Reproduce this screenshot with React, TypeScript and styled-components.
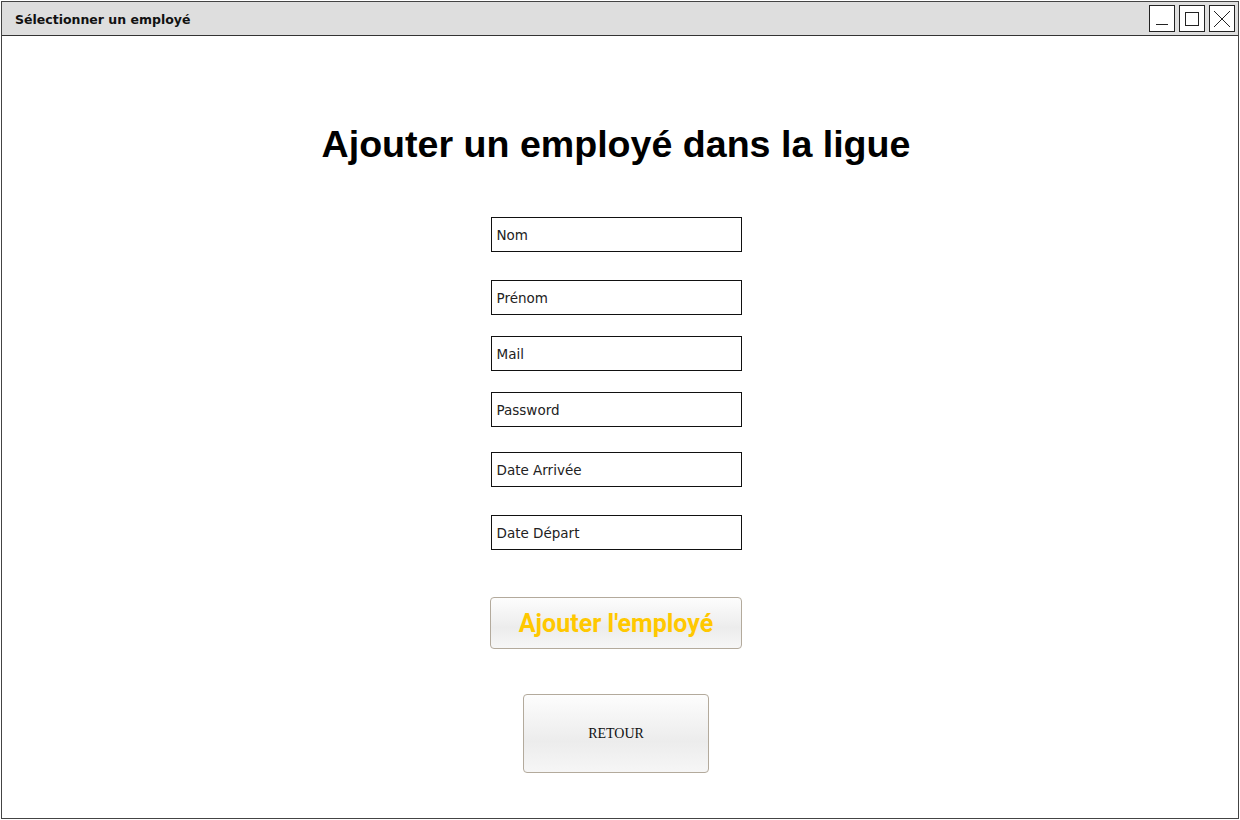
import { createGlobalStyle } from "styled-components";
import styled from "styled-components";

const GlobalStyle = createGlobalStyle`
    html, body {
        margin: 0;
        padding: 0;
        background: #ffffff;
    }
    body {
        padding: 1px 0 0 1px;
        font-family: "Liberation Sans", Arial, sans-serif;
    }
`;

const Window = styled.div`
    width: 1236px;
    height: 816px;
    border: 1px solid #444444;
    display: flex;
    flex-direction: column;
    background: #ffffff;
`;

const TitleBar = styled.div`
    height: 33px;
    flex-shrink: 0;
    display: flex;
    align-items: center;
    justify-content: space-between;
    padding: 0 3px 0 13px;
    background-color: #dedede;
    border-bottom: 1px solid #333333;
`;

const TitleText = styled.span`
    font-family: "Comic Sans MS", "DejaVu Sans", sans-serif;
    font-size: 12.5px;
    font-weight: bold;
    color: #111111;
    padding-top: 2px;
`;

const WinButtons = styled.div`
    display: flex;
    gap: 4px;
`;

const WinButton = styled.div`
    width: 24px;
    height: 25px;
    border: 1px solid #222222;
    background: #ffffff;
    display: flex;
    align-items: center;
    justify-content: center;
    > svg {
        display: block;
    }
`;

const Content = styled.div`
    flex: 1;
    display: flex;
    flex-direction: column;
    align-items: center;
    padding-top: 86px;
    padding-right: 8px;
`;

const Heading = styled.h1`
    margin: 0;
    font-family: "Liberation Sans", Arial, sans-serif;
    font-size: 37.6px;
    font-weight: bold;
    line-height: 44px;
    color: #000000;
`;

const Form = styled.div`
    margin-top: 51px;
    display: flex;
    flex-direction: column;
    align-items: center;
`;

const Field = styled.div<{ $gap: number }>`
    width: 244px;
    height: 33px;
    margin-top: ${p => p.$gap}px;
    border: 1px solid #111111;
    display: flex;
    align-items: center;
    padding-left: 5px;
    box-sizing: content-box;
    font-family: "Comic Sans MS", "DejaVu Sans", sans-serif;
    font-size: 13.5px;
    color: #222222;
    &:first-child {
        margin-top: 0;
    }
`;

const MainButton = styled.button`
    margin-top: 47px;
    width: 252px;
    height: 52px;
    border: 1px solid #b3aa9c;
    border-radius: 4px;
    background: linear-gradient(#fdfdfd, #ececec 60%, #f6f6f6);
    font-family: Roboto, "Liberation Sans", sans-serif;
    font-weight: bold;
    font-size: 25px;
    color: #ffc800;
    cursor: pointer;
`;

const BackButton = styled.button`
    margin-top: 45px;
    width: 186px;
    height: 79px;
    border: 1px solid #b3aa9c;
    border-radius: 4px;
    background: linear-gradient(#fdfdfd, #ececec 60%, #f6f6f6);
    font-family: "Liberation Serif", "Times New Roman", serif;
    font-size: 14px;
    color: #111111;
    cursor: pointer;
`;

const fields: { label: string; gap: number }[] = [
    { label: "Nom", gap: 0 },
    { label: "Prénom", gap: 28 },
    { label: "Mail", gap: 21 },
    { label: "Password", gap: 21 },
    { label: "Date Arrivée", gap: 25 },
    { label: "Date Départ", gap: 28 },
];

const App = () => {
    return (
        <>
            <GlobalStyle />
            <Window>
                <TitleBar>
                    <TitleText>Sélectionner un employé</TitleText>
                    <WinButtons>
                        <WinButton>
                            <svg width="14" height="14" viewBox="0 0 14 14">
                                <line x1="1" y1="12.5" x2="13" y2="12.5" stroke="#222" strokeWidth="1" />
                            </svg>
                        </WinButton>
                        <WinButton>
                            <svg width="14" height="14" viewBox="0 0 14 14">
                                <rect x="0.5" y="0.5" width="13" height="13" fill="none" stroke="#222" strokeWidth="1" />
                            </svg>
                        </WinButton>
                        <WinButton>
                            <svg width="18" height="18" viewBox="0 0 18 18">
                                <line x1="1" y1="1" x2="17" y2="17" stroke="#222" strokeWidth="1" />
                                <line x1="17" y1="1" x2="1" y2="17" stroke="#222" strokeWidth="1" />
                            </svg>
                        </WinButton>
                    </WinButtons>
                </TitleBar>
                <Content>
                    <Heading>Ajouter un employé dans la ligue</Heading>
                    <Form>
                        {fields.map(f => (
                            <Field key={f.label} $gap={f.gap}>{f.label}</Field>
                        ))}
                    </Form>
                    <MainButton>Ajouter l'employé</MainButton>
                    <BackButton>RETOUR</BackButton>
                </Content>
            </Window>
        </>
    );
};

export default App;
